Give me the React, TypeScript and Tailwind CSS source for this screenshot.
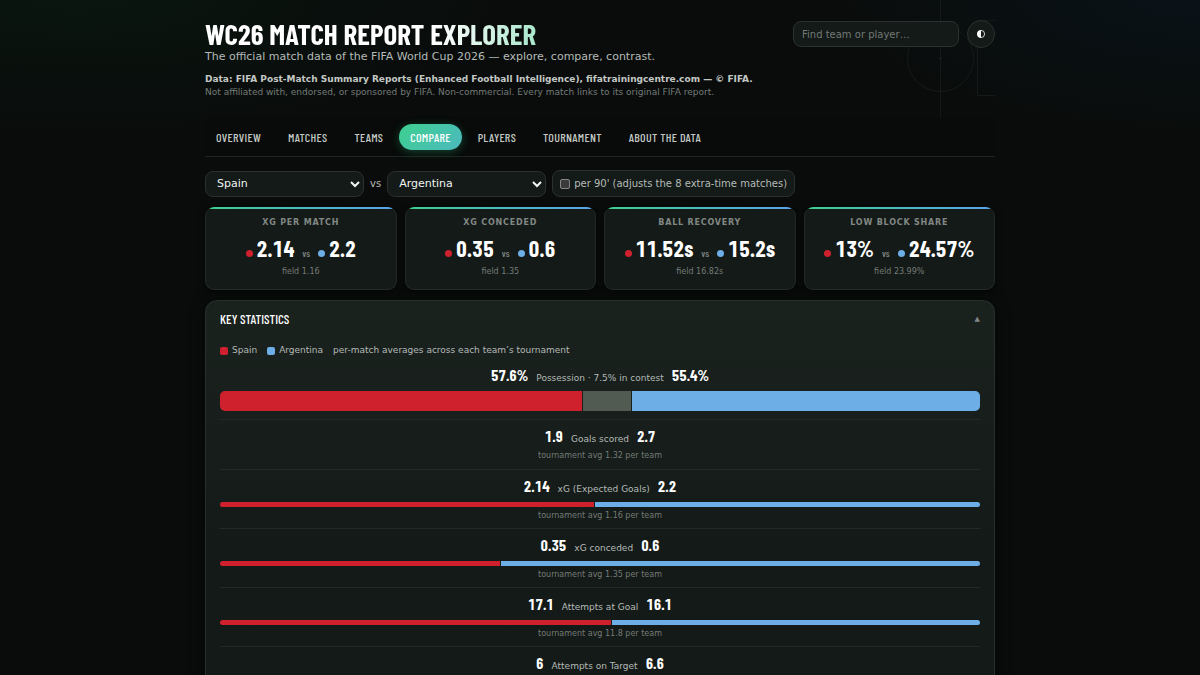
import { useState } from "react";

const TABS = ["Overview", "Matches", "Teams", "Compare", "Players", "Tournament", "About the data"];
const TEAMS = ["Spain", "Argentina", "France", "England", "Brazil", "Portugal"];

const CARDS = [
  { label: "xG per match", a: "2.14", b: "2.2", field: "field 1.16" },
  { label: "xG conceded", a: "0.35", b: "0.6", field: "field 1.35" },
  { label: "Ball recovery", a: "11.52s", b: "15.2s", field: "field 16.82s" },
  { label: "Low block share", a: "13%", b: "24.57%", field: "field 23.99%" },
];

const STATS = [
  { label: "Goals scored", a: 1.9, b: 2.7, avg: "1.32", bar: false },
  { label: "xG (Expected Goals)", a: 2.14, b: 2.2, avg: "1.16", bar: true },
  { label: "xG conceded", a: 0.35, b: 0.6, avg: "1.35", bar: true },
  { label: "Attempts at Goal", a: 17.1, b: 16.1, avg: "11.8", bar: true },
  { label: "Attempts on Target", a: 6, b: 6.6, avg: "4.2", bar: true },
];

const CONDENSED = "font-['Barlow_Condensed','Roboto_Condensed','Liberation_Sans_Narrow',sans-serif]";

function PitchLines() {
  return (
    <svg
      className="pointer-events-none absolute right-0 top-0 h-[117px] w-[90px]"
      viewBox="0 0 90 117"
      fill="none"
      stroke="#151a18"
      aria-hidden="true"
    >
      <path d="M35.5 0V117" />
      <circle cx="35.5" cy="58.5" r="33" />
      <circle cx="35.5" cy="58.5" r="1" fill="#242a27" />
      <path d="M90 20.5H72.5V95.5H90" />
    </svg>
  );
}

function TeamSelect({ label, value, onChange }: { label: string; value: string; onChange: (v: string) => void }) {
  return (
    <select
      aria-label={label}
      value={value}
      onChange={(e) => onChange(e.target.value)}
      className="h-[26px] w-[159px] rounded-lg border border-[#2b312e] bg-[#141a18] px-[7px] text-[11px] text-[#f2f5f3] scheme-dark"
    >
      {TEAMS.map((t) => (
        <option key={t}>{t}</option>
      ))}
    </select>
  );
}

function StatHeading({ a, b, label }: { a: string; b: string; label: string }) {
  return (
    <div className="flex h-5 items-baseline justify-center gap-2">
      <span className={`${CONDENSED} text-[15px] leading-5 font-bold text-white tabular-nums`}>{a}</span>
      <span className="text-[9px] text-[#b4bab7]">{label}</span>
      <span className={`${CONDENSED} text-[15px] leading-5 font-bold text-white tabular-nums`}>{b}</span>
    </div>
  );
}

export default function App() {
  const [tab, setTab] = useState("Compare");
  const [teamA, setTeamA] = useState("Spain");
  const [teamB, setTeamB] = useState("Argentina");
  const [per90, setPer90] = useState(false);
  const [open, setOpen] = useState(true);
  const [light, setLight] = useState(false);

  return (
    <div className="min-h-screen bg-[#090c0b] bg-[radial-gradient(ellipse_420px_140px_at_80px_-10px,#0a160f,transparent),radial-gradient(ellipse_360px_140px_at_100%_-10px,#0a1319,transparent)] bg-no-repeat font-['DejaVu_Sans',sans-serif] text-[#b4bab7]">
      <div className="mx-auto w-full max-w-[822px] px-4">
        <header className="relative flex h-[117px] items-start justify-between pt-5">
          <PitchLines />
          <div>
            <h1
              className={`${CONDENSED} w-fit bg-linear-to-r from-white from-70% to-[#a9e6cc] bg-clip-text text-[29px] leading-[27px] font-bold text-transparent uppercase`}
            >
              WC26 Match Report Explorer
            </h1>
            <p className="mt-[3px] text-[11px] leading-[14px]">
              The official match data of the FIFA World Cup 2026 — explore, compare, contrast.
            </p>
            <p className="mt-[9px] text-[9px] leading-[13px] font-bold text-[#c3c8c5]">
              Data: FIFA Post-Match Summary Reports (Enhanced Football Intelligence), fifatrainingcentre.com — © FIFA.
            </p>
            <p className="text-[9px] leading-[13px] text-[#747b77]">
              Not affiliated with, endorsed, or sponsored by FIFA. Non-commercial. Every match links to its original FIFA
              report.
            </p>
          </div>
          <div className="relative flex items-center gap-2">
            <input
              type="search"
              aria-label="Find team or player"
              placeholder="Find team or player…"
              className="h-[26px] w-[166px] rounded-lg border border-[#2b312e] bg-[#141a18] px-2 text-[10px] text-white placeholder:text-[#727975]"
            />
            <button
              type="button"
              aria-label="Toggle theme"
              aria-pressed={light}
              onClick={() => setLight(!light)}
              className="flex size-7 items-center justify-center rounded-full border border-[#2b312e] bg-[#141a18]"
            >
              <svg viewBox="0 0 10 10" className="size-2.5" aria-hidden="true">
                <circle cx="5" cy="5" r="3.6" fill="none" stroke="#fff" strokeWidth="0.8" />
                <path d="M5 1.2A3.8 3.8 0 0 0 5 8.8Z" fill="#fff" />
              </svg>
            </button>
          </div>
        </header>

        <nav className="flex h-10 items-center gap-[5px] border-b border-[#1e2623] bg-[#080b09]">
          {TABS.map((t) => (
            <button
              key={t}
              type="button"
              onClick={() => setTab(t)}
              aria-current={t === tab ? "page" : undefined}
              className={`${CONDENSED} h-[26px] rounded-full px-[11px] text-[12px] font-medium tracking-wide uppercase ${
                t === tab
                  ? "bg-linear-135 from-[#3ecf8e] to-[#4cb9bd] text-white shadow-[0_2px_8px_#1c6b4a99]"
                  : "text-[#c3c8c5]"
              }`}
            >
              {t}
            </button>
          ))}
        </nav>

        <main>
          <div className="mt-[13px] flex items-center gap-1.5 text-[10px]">
            <TeamSelect label="First team" value={teamA} onChange={setTeamA} />
            <span>vs</span>
            <TeamSelect label="Second team" value={teamB} onChange={setTeamB} />
            <label className="flex h-[27px] items-center gap-1 rounded-lg border border-[#2b312e] bg-[#141a18] px-[7px]">
              <input
                type="checkbox"
                checked={per90}
                onChange={(e) => setPer90(e.target.checked)}
                className="size-2.5 appearance-none rounded-xs border border-[#858585] bg-[#3b3b3b] checked:bg-[#3ecf8e]"
              />
              per 90' (adjusts the 8 extra-time matches)
            </label>
          </div>

          <section aria-label="Headline comparison" className="mt-2.5 grid grid-cols-4 gap-2">
            {CARDS.map((c) => (
              <article
                key={c.label}
                className="overflow-hidden rounded-[9px] border border-t-0 border-[#232a27] bg-[#141a18] text-center shadow-[0_2px_8px_#00000080]"
              >
                <div className="h-0.5 bg-linear-to-r from-[#3ecf8e] to-[#5aa2ea]" />
                <div className="pt-2 pb-[11px]">
                  <h2 className="text-[8px] leading-3 font-bold tracking-widest text-[#818884] uppercase">{c.label}</h2>
                  <div
                    className={`${CONDENSED} mt-[3px] flex h-8 items-baseline justify-center text-[22px] leading-8 font-bold text-white tabular-nums`}
                  >
                    <span className="mr-1 size-[7px] rounded-full bg-[#cf202e]" />
                    <span>{c.a}</span>
                    <span className="mx-2 text-[10px] font-medium text-[#818884]">vs</span>
                    <span className="mr-1 size-[7px] rounded-full bg-[#6daee6]" />
                    <span>{c.b}</span>
                  </div>
                  <p className="mt-0.5 text-[8px] leading-3 text-[#747b77]">{c.field}</p>
                </div>
              </article>
            ))}
          </section>

          <section className="mt-2.5 rounded-t-xl border border-[#27302b] bg-linear-to-b from-[#1a221e] to-[#141a18] to-[240px] px-[14px] shadow-[0_4px_16px_#00000080]">
            <h2>
              <button
                type="button"
                aria-expanded={open}
                onClick={() => setOpen(!open)}
                className={`${CONDENSED} flex h-[37px] w-full items-center justify-between text-[13px] font-medium text-white uppercase`}
              >
                Key statistics
                <span className="font-['DejaVu_Sans',sans-serif] text-[7px] text-[#818884]">{open ? "▲" : "▼"}</span>
              </button>
            </h2>
            {open && (
              <>
                <div className="mt-1.5 flex h-[14px] items-center gap-2.5 text-[9px]">
                  <span className="flex items-center gap-1">
                    <i className="size-2 rounded-xs bg-[#cf202e]" />
                    {teamA}
                  </span>
                  <span className="flex items-center gap-1">
                    <i className="size-2 rounded-xs bg-[#6daee6]" />
                    {teamB}
                  </span>
                  <span>per-match averages across each team’s tournament</span>
                </div>

                <div className="pt-[7px] pb-2">
                  <StatHeading a="57.6%" b="55.4%" label="Possession · 7.5% in contest" />
                  <div className="mt-1.5 flex h-5 gap-px overflow-hidden rounded-[5px]">
                    <div className="basis-0 bg-[#cf202e]" style={{ flexGrow: 57.6 }} />
                    <div className="basis-0 bg-[#525b52]" style={{ flexGrow: 7.5 }} />
                    <div className="basis-0 bg-[#6daee6]" style={{ flexGrow: 55.4 }} />
                  </div>
                </div>

                {STATS.map((s) => (
                  <div key={s.label} className="border-t border-[#222926] pt-1.5 pb-1.5">
                    <StatHeading a={String(s.a)} b={String(s.b)} label={s.label} />
                    {s.bar && (
                      <div className="mt-1.5 flex h-[5px] gap-px overflow-hidden rounded-full">
                        <div className="basis-0 bg-[#cf202e]" style={{ flexGrow: s.a * 10 }} />
                        <div className="basis-0 bg-[#6daee6]" style={{ flexGrow: s.b * 10 }} />
                      </div>
                    )}
                    <p
                      className={`text-center text-[8px] leading-3 text-[#747b77] ${s.bar ? "mt-[3px]" : "mt-1 mb-px"}`}
                    >
                      tournament avg {s.avg} per team
                    </p>
                  </div>
                ))}
              </>
            )}
          </section>
        </main>
      </div>
    </div>
  );
}
